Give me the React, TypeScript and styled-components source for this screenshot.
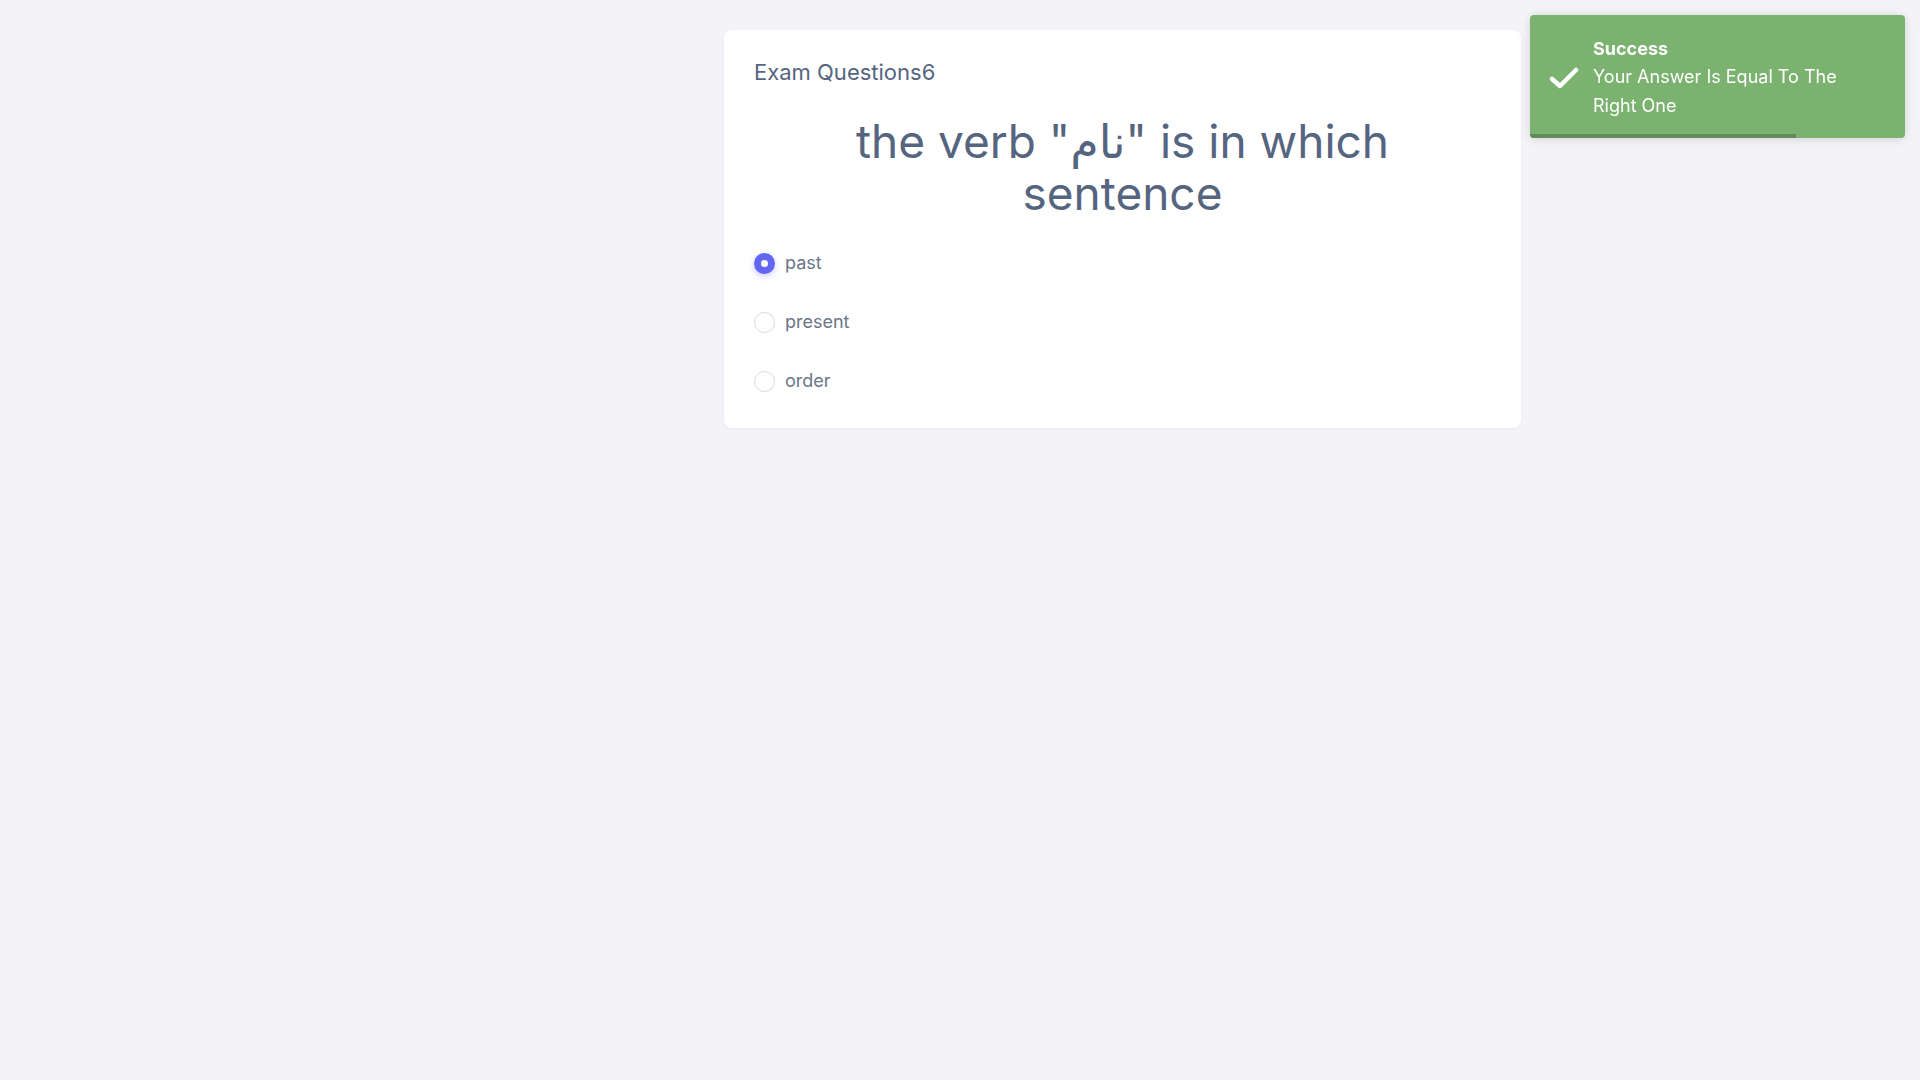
import React, { useState } from 'react';
import styled, { createGlobalStyle } from 'styled-components';

const GlobalStyle = createGlobalStyle`
    html, body {
        margin: 0;
        padding: 0;
        background: #f3f3f8;
        font-family: Inter, "Liberation Sans", "Noto Sans", sans-serif;
    }
`;

const Page = styled.div`
    min-height: 1080px;
    padding: 30px 0 0 724px;
    box-sizing: border-box;
`;

const Card = styled.div`
    width: 797px;
    box-sizing: border-box;
    background: #fff;
    border-radius: 8px;
    box-shadow: 0 1px 3px rgba(60, 64, 100, 0.06);
    padding: 26px 30px 36px;
`;

const Title = styled.div`
    font-size: 22px;
    color: #56657f;
    line-height: 32px;
`;

const Question = styled.h1`
    margin: 27px 0 33px;
    padding: 0 24px;
    text-align: center;
    font-size: 46px;
    font-weight: 400;
    line-height: 52px;
    color: #56657f;
    font-family: Inter, "Noto Sans", "DejaVu Sans", sans-serif;
`;

const Options = styled.div`
    display: flex;
    flex-direction: column;
    gap: 37px;
`;

const Option = styled.label`
    display: flex;
    align-items: center;
    gap: 10px;
    cursor: pointer;
    font-size: 18px;
    color: #6b7689;
    line-height: 22px;
`;

const Radio = styled.span<{ $checked: boolean }>`
    width: 21px;
    height: 21px;
    border-radius: 50%;
    box-sizing: border-box;
    flex-shrink: 0;
    display: flex;
    align-items: center;
    justify-content: center;
    background: ${(p) => (p.$checked ? '#6366f1' : '#fff')};
    border: ${(p) => (p.$checked ? 'none' : '1px solid #d9dbe1')};
    box-shadow: ${(p) => (p.$checked ? '0 2px 6px rgba(99, 102, 241, 0.35)' : 'none')};

    &::after {
        content: '';
        width: 7px;
        height: 7px;
        border-radius: 50%;
        background: #fff;
        display: ${(p) => (p.$checked ? 'block' : 'none')};
    }
`;

const Toast = styled.div`
    position: fixed;
    top: 15px;
    right: 15px;
    width: 375px;
    height: 123px;
    box-sizing: border-box;
    background: #7cb26f;
    border-radius: 4px;
    box-shadow: 0 1px 10px rgba(0, 0, 0, 0.1), 0 2px 15px rgba(0, 0, 0, 0.05);
    display: flex;
    align-items: center;
    padding: 2px 30px 0 19px;
    overflow: hidden;
    color: #fff;
`;

const ToastIcon = styled.div`
    width: 30px;
    flex-shrink: 0;
    margin-right: 14px;
    display: flex;
`;

const ToastBody = styled.div`
    display: flex;
    flex-direction: column;
`;

const ToastTitle = styled.div`
    font-weight: 700;
    font-size: 18px;
    line-height: 26px;
`;

const ToastMessage = styled.div`
    font-size: 18px;
    line-height: 29px;
`;

const Progress = styled.div`
    position: absolute;
    left: 0;
    bottom: 0;
    height: 4px;
    background: #658a59;
`;

const options = ['past', 'present', 'order'];

export default function App() {
    const [selected, setSelected] = useState('past');

    return (
        <>
            <GlobalStyle />
            <Page>
                <Card>
                    <Title>Exam Questions6</Title>
                    <Question>the verb "نام" is in which sentence</Question>
                    <Options>
                        {options.map((o) => (
                            <Option key={o} onClick={() => setSelected(o)}>
                                <Radio $checked={selected === o} />
                                {o}
                            </Option>
                        ))}
                    </Options>
                </Card>
            </Page>
            <Toast>
                <ToastIcon>
                    <svg width="30" height="24" viewBox="0 0 30 24">
                        <path
                            d="M3 13 L11 20 L27 4"
                            fill="none"
                            stroke="#fff"
                            strokeWidth="4.5"
                            strokeLinecap="round"
                            strokeLinejoin="round"
                        />
                    </svg>
                </ToastIcon>
                <ToastBody>
                    <ToastTitle>Success</ToastTitle>
                    <ToastMessage>Your Answer Is Equal To The Right One</ToastMessage>
                </ToastBody>
                <Progress style={{ width: `${(266 / 375) * 100}%` }} />
            </Toast>
        </>
    );
}
